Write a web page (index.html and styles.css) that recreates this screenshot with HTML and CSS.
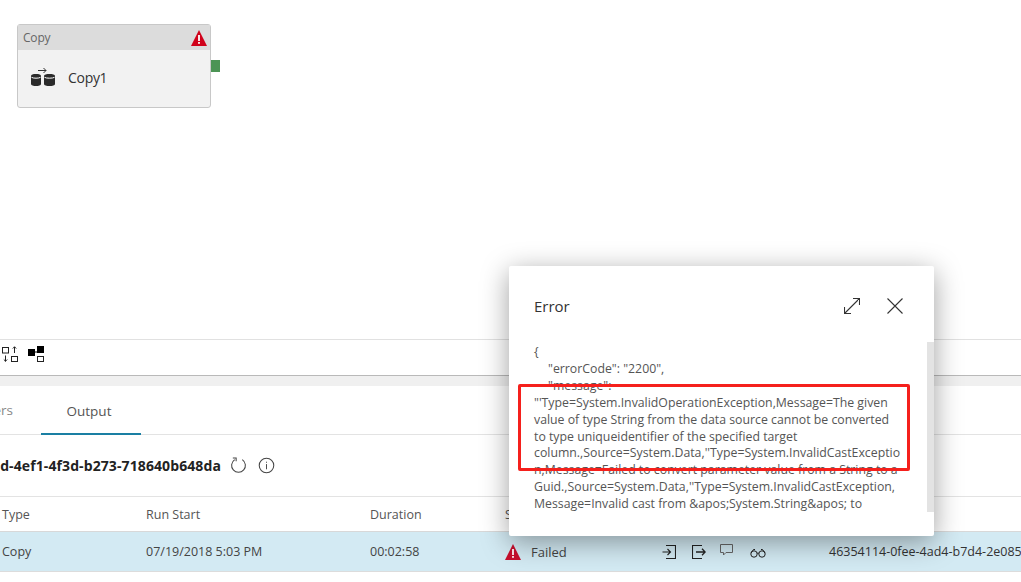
FILE: index.html
```html
<!DOCTYPE html>
<html lang="en">
<head>
<meta charset="utf-8">
<title>Copy error</title>
<link rel="stylesheet" href="styles.css">
</head>
<body>
<div class="page">
  <section class="canvas">
    <div class="node">
      <div class="node-head">
        <span>Copy</span>
        <svg class="warn-sm" viewBox="0 0 16 16"><path d="M8 0 16 16H0Z" fill="#d0021b"/><rect x="7.100" y="5" width="1.800" height="6" fill="#fff"/><rect x="7.100" y="12" width="1.800" height="1.800" fill="#fff"/></svg>
      </div>
      <div class="node-body">
        <svg class="copy-icon" viewBox="0 0 26 20"><path d="M8 2.500h8M13.500 0 16 2.500 13.500 5" fill="none" stroke="#333" stroke-width="1"/><path d="M1 8C1 6.500 3 6 6 6S11 6.500 11 8V16C11 17.500 8.500 18 6 18S1 17.500 1 16Z" fill="#2b2b2b"/><path d="M14 8C14 6.500 16.500 6 19.500 6S25 6.500 25 8V16C25 17.500 22.500 18 19.500 18S14 17.500 14 16Z" fill="#2b2b2b"/><path d="M1.500 9.300C3 10.500 9 10.500 10.500 9.300M14.500 9.300C16 10.500 23 10.500 24.500 9.300" fill="none" stroke="#fff" stroke-width="1"/></svg>
        <span>Copy1</span>
      </div>
      <span class="port"></span>
    </div>
  </section>

  <section class="toolbar">
    <svg class="tool" viewBox="0 0 16 16"><g fill="none" stroke="#222" stroke-width="1"><rect x=".5" y="1.500" width="6" height="5.500"/><rect x="9.500" y="10.500" width="6" height="5"/><path d="M12.500 7V.8M10.800 2.500l1.700-1.700 1.700 1.700M3.500 9.500v6M1.800 13.500l1.700 1.700 1.700-1.700"/></g></svg>
    <svg class="tool" viewBox="0 0 16 16"><rect x="0" y="3" width="7" height="7" fill="#000"/><rect x="9" y="0" width="7" height="7" fill="#000"/><path d="M7 6h2" stroke="#000"/><rect x="9.500" y="10.500" width="6" height="5" fill="none" stroke="#222"/></svg>
  </section>
  <div class="band"></div>

  <nav class="tabs">
    <div class="tab-clipped"><span>ers</span></div>
    <div class="tab-active">Output</div>
  </nav>

  <div class="run-row">
    <div class="run-id"><span>d-4ef1-4f3d-b273-718640b648da</span></div>
    <svg class="run-icon" viewBox="0 0 18 18"><path d="M5 2.800A7.300 7.300 0 1 0 13 2.800" fill="none" stroke="#444" stroke-width="1.100"/><path d="M3 1h3.500v3.500" fill="none" stroke="#444" stroke-width="1.100"/></svg>
    <svg class="run-icon" viewBox="0 0 18 18"><circle cx="9" cy="9" r="7.700" fill="none" stroke="#444" stroke-width="1.100"/><rect x="8.500" y="7.500" width="1" height="5.500" fill="#444"/><rect x="8.500" y="5" width="1" height="1.100" fill="#444"/></svg>
  </div>

  <div class="grid grid-head">
    <span>Type</span><span>Run Start</span><span>Duration</span><span>Status</span><span></span><span></span>
  </div>
  <div class="grid grid-row">
    <span>Copy</span>
    <span>07/19/2018 5:03 PM</span>
    <span>00:02:58</span>
    <span class="status">
      <svg class="warn" viewBox="0 0 16 16"><path d="M8 0 16 16H0Z" fill="#c8102e"/><rect x="7.100" y="5" width="1.800" height="6" fill="#fff"/><rect x="7.100" y="12" width="1.800" height="1.800" fill="#fff"/></svg>
      Failed
    </span>
    <span class="actions">
      <svg class="act act-in" viewBox="0 0 14 14"><path d="M.5 7h8M5.500 4l3 3-3 3M4 .5h9.500v13H4" fill="none" stroke="#222" stroke-width="1.100"/></svg>
      <svg class="act act-out" viewBox="0 0 14 14"><path d="M10 .5H.5v13H10" fill="none" stroke="#222" stroke-width="1.100"/><path d="M4 7h9M10 3.800 13.200 7 10 10.200" fill="none" stroke="#222" stroke-width="1.300"/></svg>
      <svg class="act act-chat" viewBox="0 0 13 12"><path d="M.5.500h12v8H6L3.500 11V8.500H.5Z" fill="none" stroke="#666" stroke-width="1"/></svg>
      <svg class="act-glass" viewBox="0 0 16 10"><g fill="none" stroke="#222" stroke-width="1"><circle cx="4" cy="6" r="3.200"/><circle cx="12" cy="6" r="3.200"/><path d="M7 5.500c.7-.6 1.300-.6 2 0M1 5 3.500 1.500H5M15 5 12.500 1.500H11"/></g></svg>
    </span>
    <span class="guid">46354114-0fee-4ad4-b7d4-2e085</span>
  </div>

  <aside class="dialog">
    <header class="dialog-head">
      <h2>Error</h2>
      <svg class="dlg-icon" viewBox="0 0 16 16"><path d="M.5 15.500 15.500.5M9 .5h6.500V7M.5 9v6.500H7" fill="none" stroke="#333" stroke-width="1.100"/></svg>
      <svg class="dlg-icon close" viewBox="0 0 16 16"><path d="M.5.500 15.500 15.500M15.500.500.5 15.500" fill="none" stroke="#333" stroke-width="1.100"/></svg>
    </header>
    <div class="dialog-scroll">
      <div class="dialog-text">{
<span class="ind">"errorCode": "2200",</span>
<span class="ind">"message":</span>
"'Type=System.InvalidOperationException,Message=The given
value of type String from the data source cannot be converted
to type uniqueidentifier of the specified target
column.,Source=System.Data,''Type=System.InvalidCastExceptio
n,Message=Failed to convert parameter value from a String to a
Guid.,Source=System.Data,''Type=System.InvalidCastException,
Message=Invalid cast from &amp;apos;System.String&amp;apos; to</div>
      <div class="scrollbar"></div>
    </div>
  </aside>
  <div class="highlight"></div>
</div>
</body>
</html>
```
FILE: styles.css
```css
* { box-sizing: border-box; }
html, body { margin: 0; padding: 0; }
body {
  font-family: "Open Sans", "Noto Sans", sans-serif;
  color: #333;
  background: #fff;
  font-size: 12px;
  overflow: hidden;
}
.page { position: relative; width: 1021px; height: 582px; overflow: hidden; }

.canvas { height: 339px; position: relative; }
.node {
  position: absolute; left: 17px; top: 24px; width: 194px; height: 84px;
  border: 1px solid #c8c8c8; border-radius: 3px; background: #f2f2f2;
}
.node-head {
  height: 25px; background: #dcdcdc; color: #666; padding: 0 3px 0 5px;
  display: flex; align-items: center; justify-content: space-between;
  font-size: 12px; letter-spacing: -.2px;
}
.warn-sm { width: 16px; height: 16px; }
.node-body { height: 57px; display: flex; align-items: center; padding: 0 0 2px 12px; gap: 12px; font-size: 14px; letter-spacing: -.3px; color: #333; }
.copy-icon { width: 26px; height: 20px; }
.port { position: absolute; left: 193px; top: 35px; width: 9px; height: 12px; background: #4c9455; }

.toolbar {
  height: 37px; border-top: 1px solid #e1e1e1; border-bottom: 1px solid #b9b9b9;
  display: flex; align-items: flex-start; padding: 6px 0 0 2px; gap: 10px;
}
.tool { width: 16px; height: 16px; }
.band { height: 10px; background: #f0f0f0; }

.tabs { height: 49px; border-bottom: 1px solid #e3e3e3; display: flex; font-size: 13.500px; color: #555; }
.tab-clipped { width: 41px; padding-right: 28px; display: flex; align-items: center; justify-content: flex-end; color: #888; }
.tab-active { width: 100px; border-bottom: 2px solid #1a7fa3; margin-bottom: -1px; padding-right: 4px; text-align: center; line-height: 50px; }

.run-row { height: 61px; display: flex; align-items: center; }
.run-id { width: 221px; overflow: hidden; display: flex; justify-content: flex-end; font-weight: 700; font-size: 14px; letter-spacing: .1px; color: #222; white-space: nowrap; margin-bottom: 1px; }
.run-icon { width: 17px; height: 17px; margin-left: 9px; }
.run-icon + .run-icon { margin-left: 11px; }

.grid {
  display: grid; grid-template-columns: 144px 224px 135px 146px 178px 1fr;
  padding-left: 2px; align-items: center; white-space: nowrap;
  font-size: 12.500px;
}
.grid-head { height: 36px; border-top: 1px solid #e3e3e3; border-bottom: 1px solid #d8d8d8; color: #555; }
.grid-row { height: 40px; background: #d3eaf3; border-bottom: 1px solid #dcdcdc; color: #444; }
.status { display: flex; align-items: center; gap: 10px; font-size: 13px; }
.warn { width: 16px; height: 16px; }
.actions { display: flex; align-items: center; }
.act { width: 14px; height: 14px; }
.act-in { margin-left: 11px; }
.act-out { margin-left: 16px; }
.act-chat { width: 13px; height: 12px; margin-left: 14px; margin-top: -4px; }
.act-glass { width: 16px; height: 10px; margin-left: 17px; margin-top: 2px; }
.guid { color: #333; }

.dialog {
  position: absolute; left: 509px; top: 266px; width: 425px; height: 270px;
  background: #fff; border-radius: 2px; box-shadow: 0 6px 28px rgba(0,0,0,.38);
}
.dialog-head { height: 76px; display: flex; align-items: center; padding: 0 31px 0 25px; }
.dialog-head h2 { margin: 4px 0 0; font-size: 15px; font-weight: 500; color: #333; flex: 1; }
.dlg-icon { width: 16px; height: 16px; margin-top: 4px; }
.close { margin-left: 27px; }
.dialog-scroll { height: 170px; position: relative; overflow: hidden; }
.dialog-text { padding: 2px 0 0 25px; white-space: pre; line-height: 16.900px; font-size: 12.300px; color: #555; }
.ind { padding-left: 14px; }
.scrollbar { position: absolute; right: 0; top: 0; width: 7px; height: 170px; background: #e3e3e3; }
.highlight { position: absolute; left: 518px; top: 384px; width: 392px; height: 87px; border: 3px solid #f5201c; border-radius: 2px; }
```
